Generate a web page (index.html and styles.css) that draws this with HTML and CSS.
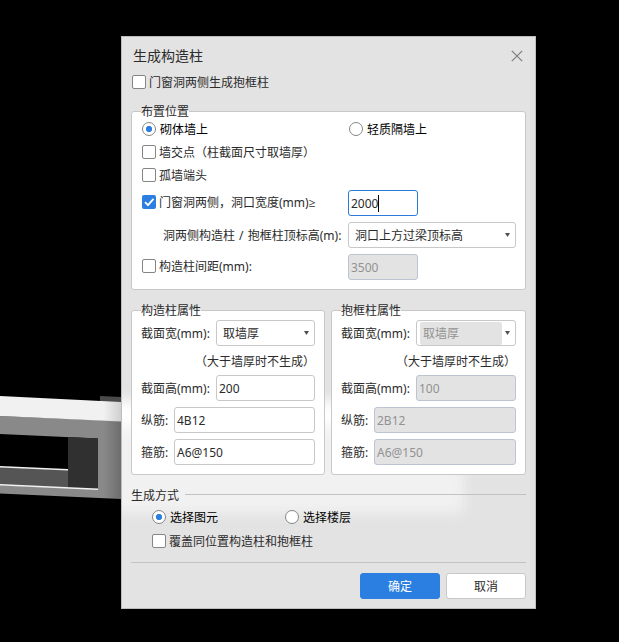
FILE: index.html
```html
<!DOCTYPE html>
<html lang="zh-CN">
<head>
<meta charset="utf-8">
<title>生成构造柱</title>
<link rel="stylesheet" href="styles.css">
</head>
<body>
<svg class="scene" viewBox="0 0 619 642" aria-hidden="true">
  <defs>
    <linearGradient id="beam" x1="0" x2="121" y1="0" y2="0" gradientUnits="userSpaceOnUse">
      <stop offset="0" stop-color="#f1f1f1"/><stop offset=".86" stop-color="#f1f1f1"/><stop offset="1" stop-color="#cfcfcf"/>
    </linearGradient>
    <linearGradient id="wall" x1="0" x2="121" y1="0" y2="0" gradientUnits="userSpaceOnUse">
      <stop offset="0" stop-color="#898989"/><stop offset=".86" stop-color="#898989"/><stop offset="1" stop-color="#6d6d6d"/>
    </linearGradient>
  </defs>
  <path fill="#4a4a4a" d="M100 396L121 397V403H100z"/>
  <path fill="url(#wall)" d="M0 416L121 421V499L0 493.500z"/>
  <path fill="url(#beam)" d="M0 396L121 402V421.500L0 416z"/>
  <path fill="#000" d="M0 434L98 438.500V489L0 485z"/>
  <path fill="#555" d="M0 467L68 470V488L0 485z"/>
  <path fill="#303030" d="M68 437L98 438.500V489L68 487.500z"/>
  <path fill="none" stroke="#f1f1f1" stroke-width="1.500" d="M0 466.800L68 469.800M0 484.800L98 489.200"/>
</svg>
<main class="dialog">
  <div class="glow"></div>
  <header class="title-bar">
    <h1>生成构造柱</h1>
    <svg class="close" viewBox="0 0 12 12"><path d="M.8.800l10.400 10.400M11.200.800L.8 11.200"/></svg>
  </header>
  <label class="option top-option"><i class="check"></i>门窗洞两侧生成抱框柱</label>

  <section class="group placement">
    <h2 class="legend">布置位置</h2>
    <div class="row short">
      <label class="option radio-option half"><i class="radio on"></i>砌体墙上</label>
      <label class="option radio-option"><i class="radio"></i>轻质隔墙上</label>
    </div>
    <div class="row short"><label class="option"><i class="check"></i>墙交点（柱截面尺寸取墙厚）</label></div>
    <div class="row short"><label class="option"><i class="check"></i>孤墙端头</label></div>
    <div class="fields">
      <div class="row">
        <label class="option wide-label"><i class="check on"><svg viewBox="0 0 14 14"><path d="M3 7.200l3 3 5.500-6.400"/></svg></i><span>门窗洞两侧，洞口宽度(mm)<span class="math">≥</span></span></label>
        <div class="input small focus">2000<span class="caret"></span></div>
      </div>
      <div class="row">
        <span class="label wide-label indented">洞两侧构造柱 / 抱框柱顶标高(m):</span>
        <div class="input select">洞口上方过梁顶标高<i class="arrow"></i></div>
      </div>
      <div class="row">
        <label class="option wide-label"><i class="check"></i>构造柱间距(mm):</label>
        <div class="input small disabled">3500</div>
      </div>
    </div>
  </section>

  <div class="columns">
    <section class="group props">
      <h2 class="legend">构造柱属性</h2>
      <div class="row"><span class="label">截面宽(mm):</span><div class="input select">取墙厚<i class="arrow"></i></div></div>
      <div class="note">（大于墙厚时不生成）</div>
      <div class="fields">
        <div class="row"><span class="label">截面高(mm):</span><div class="input">200</div></div>
        <div class="row"><span class="label narrow">纵筋:</span><div class="input">4B12</div></div>
        <div class="row"><span class="label narrow">箍筋:</span><div class="input">A6@150</div></div>
      </div>
    </section>
    <section class="group props">
      <h2 class="legend">抱框柱属性</h2>
      <div class="row"><span class="label">截面宽(mm):</span><div class="input select locked"><span class="locked-value">取墙厚</span><i class="arrow"></i></div></div>
      <div class="note">（大于墙厚时不生成）</div>
      <div class="fields">
        <div class="row"><span class="label">截面高(mm):</span><div class="input disabled">100</div></div>
        <div class="row"><span class="label narrow">纵筋:</span><div class="input disabled">2B12</div></div>
        <div class="row"><span class="label narrow">箍筋:</span><div class="input disabled">A6@150</div></div>
      </div>
    </section>
  </div>

  <section class="method">
    <div class="section-head"><h2>生成方式</h2><span class="rule"></span></div>
    <div class="row method-row">
      <label class="option radio-option method-first"><i class="radio on"></i>选择图元</label>
      <label class="option radio-option"><i class="radio"></i>选择楼层</label>
    </div>
    <div class="row method-row"><label class="option"><i class="check"></i>覆盖同位置构造柱和抱框柱</label></div>
  </section>

  <footer class="actions">
    <button class="button primary">确定</button>
    <button class="button">取消</button>
  </footer>
</main>
</body>
</html>
```
FILE: styles.css
```css
* { box-sizing: border-box; }

body {
  margin: 0;
  width: 619px;
  height: 642px;
  overflow: hidden;
  background: #000;
  color: #2b2b2b;
  font: 12px/16px "Noto Sans", "Noto Sans CJK SC", sans-serif;
}

h1, h2 { margin: 0; font-weight: 400; }

.scene { position: absolute; left: 0; top: 0; width: 619px; height: 642px; }

.dialog {
  position: relative;
  isolation: isolate;
  width: 415px;
  height: 573px;
  margin: 36px 0 0 121px;
  padding: 0 9px;
  overflow: hidden;
  border: 1px solid #bdbdbd;
  background: #e3e3e3;
}

.glow {
  position: absolute;
  z-index: -1;
  left: -20px;
  top: 364px;
  width: 362px;
  height: 112px;
  background: linear-gradient(#ffffff 0 20px, #f1f1f1 30px);
  filter: blur(7px);
}

.title-bar { display: flex; align-items: center; justify-content: space-between; height: 38px; padding: 0 3px 0 2px; }
.title-bar h1 { font-size: 14px; line-height: 20px; }
.close { width: 12px; height: 12px; fill: none; stroke: #7c7c7c; stroke-width: 1.2; }

.option { display: flex; align-items: center; gap: 3px; padding-top: 2px; white-space: nowrap; }
.radio-option { gap: 4px; color: #000; }
.top-option { height: 16px; margin-top: -1px; padding-left: 1px; }

.check, .radio { flex: none; width: 14px; height: 14px; margin-bottom: 2px; border: 1px solid #858585; background: #fff; }
.check { border-radius: 2px; }
.check.on { border: 0; background: #2b7fe0; }
.check svg { display: block; width: 14px; height: 14px; fill: none; stroke: #fff; stroke-width: 1.8; }
.radio { border-radius: 50%; }
.radio.on { background: radial-gradient(circle, #2b7fe0 0 2.8px, #fff 3.4px); }

.group { position: relative; border: 1px solid #c8c8c8; border-radius: 3px; background: #fff; }
.legend {
  position: absolute;
  left: 9px;
  top: -9px;
  height: 17px;
  padding-top: 1px;
  font-size: 12px;
  line-height: 16px;
  background: linear-gradient(#e3e3e3 0 8px, #fff 8px);
}

.placement { height: 179px; margin-top: 21px; padding: 6px 9px 0 10px; }
.placement .option { padding-top: 0; }
.row { display: flex; align-items: center; height: 26px; }
.row.short { height: 23px; }
.half { width: 207px; }
.fields { display: grid; gap: 6px; }
.placement .fields { margin-top: 3px; }
.label { flex: none; width: 75px; padding-top: 2px; white-space: nowrap; }
.label.narrow { width: 33px; }
.wide-label { flex: none; width: 206px; white-space: nowrap; }
.indented { padding-left: 21px; word-spacing: 1px; }
.math { font-family: "Open Sans", sans-serif; }

.input {
  flex: 1;
  display: flex;
  align-items: center;
  height: 26px;
  padding: 2px 2px 0;
  border: 1px solid #c8c8c8;
  border-radius: 3px;
  background: #fff;
}
.input.small { flex: none; width: 70px; }
.input.focus { border-color: #2b7bd6; }
.input.disabled { border-color: #bcc4d2; background: #e3e3e3; color: #929292; }
.caret { width: 1px; height: 17px; margin-bottom: 2px; background: #000; }
.select { justify-content: space-between; padding: 2px 5px 0 6px; }
.arrow { width: 5px; height: 4px; margin-bottom: 2px; background: #4c4f55; clip-path: polygon(0 0, 100% 0, 50% 100%); }
.select.locked { padding-left: 3px; }
.locked-value { width: 82px; height: 23px; margin-bottom: 2px; padding-left: 3px; border-radius: 2px; background: #e3e3e3; color: #929292; line-height: 24px; }

.columns { display: grid; grid-template-columns: 194px 195px; gap: 6px; margin-top: 20px; }
.props { height: 165px; padding: 9px 9px 0; }
.note { height: 29px; line-height: 31px; text-align: right; white-space: nowrap; }

.method { height: 76px; margin-top: 12px; border-bottom: 1px solid #c2c2c2; }
.section-head { display: flex; gap: 6px; height: 16px; }
.section-head h2 { padding-top: 1px; font-size: 12px; line-height: 16px; }
.rule { flex: 1; height: 1px; margin-top: 7px; background: #c2c2c2; }
.method-row { height: 24px; padding-left: 21px; }
.section-head + .method-row { margin-top: 2px; }
.method-first { width: 133px; }

.actions { display: flex; justify-content: flex-end; gap: 6px; margin-top: 10px; }
.button {
  width: 80px;
  height: 26px;
  padding: 1px 0 0;
  border: 1px solid #c8c8c8;
  border-radius: 3px;
  background: #fff;
  color: #2b2b2b;
  font: inherit;
}
.button.primary { border-color: #2b7fe0; background: #2b7fe0; color: #fff; }
```
